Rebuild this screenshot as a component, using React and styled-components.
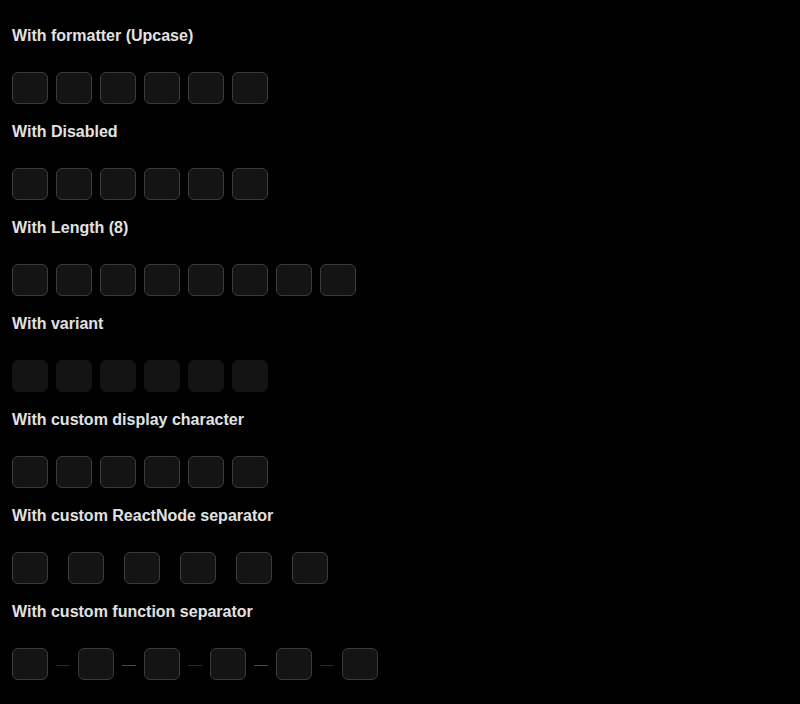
import React from "react";
import styled, { createGlobalStyle } from "styled-components";

const GlobalStyle = createGlobalStyle`
  html, body {
    margin: 0;
    padding: 0;
    background: #000000;
  }
  body {
    font-family: "Liberation Sans", Arial, sans-serif;
  }
`;

const Page = styled.div`
  padding: 8px 12px 0;
  background: #000000;
  min-height: 704px;
  box-sizing: border-box;
`;

const Section = styled.section`
  padding-top: 19px;
`;

const Title = styled.h3`
  margin: 0 0 27px;
  font-size: 16px;
  line-height: 18px;
  font-weight: 700;
  color: #e2e2e2;
`;

const Row = styled.div`
  display: flex;
  align-items: center;
  gap: ${(props) => props.gap || 8}px;
  height: 32px;
`;

const Slot = styled.div`
  flex: none;
  width: 36px;
  height: 32px;
  box-sizing: border-box;
  border-radius: 6px;
  background: #141414;
  border: 1px solid ${(props) => (props.variant === "filled" ? "#141414" : "#3a3a3a")};
`;

const Line = styled.span`
  display: block;
  flex: none;
  width: 14px;
  height: 1px;
  margin-top: 2px;
  background: ${(props) => props.color};
`;

const slots = (n, variant) =>
  Array.from({ length: n }, (_, i) => <Slot key={i} variant={variant} />);

const Otp = ({ length = 6, variant, gap, separator }) => {
  if (!separator) {
    return <Row gap={gap}>{slots(length, variant)}</Row>;
  }
  const items = [];
  for (let i = 0; i < length; i++) {
    items.push(<Slot key={"s" + i} variant={variant} />);
    if (i < length - 1) items.push(<React.Fragment key={"p" + i}>{separator(i)}</React.Fragment>);
  }
  return <Row gap={gap}>{items}</Row>;
};

const App = () => {
  return (
    <>
      <GlobalStyle />
      <Page>
        <Section>
          <Title>With formatter (Upcase)</Title>
          <Otp />
        </Section>
        <Section>
          <Title>With Disabled</Title>
          <Otp />
        </Section>
        <Section>
          <Title>With Length (8)</Title>
          <Otp length={8} />
        </Section>
        <Section>
          <Title>With variant</Title>
          <Otp variant="filled" />
        </Section>
        <Section>
          <Title>With custom display character</Title>
          <Otp />
        </Section>
        <Section>
          <Title>With custom ReactNode separator</Title>
          <Otp gap={20} />
        </Section>
        <Section>
          <Title>With custom function separator</Title>
          <Otp separator={(i) => <Line color={i % 2 === 0 ? "#1414c8" : "#c81414"} />} />
        </Section>
      </Page>
    </>
  );
};

export default App;
